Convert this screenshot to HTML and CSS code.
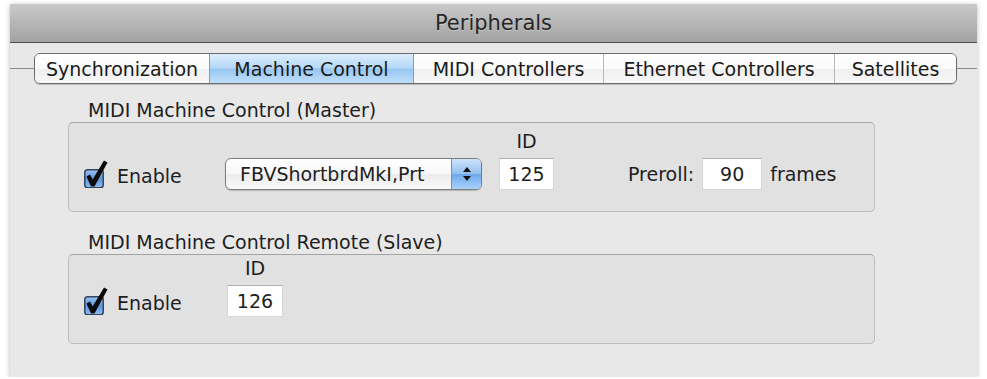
FILE: index.html
```html
<!DOCTYPE html>
<html>
<head>
<meta charset="utf-8">
<title>Peripherals</title>
<link rel="stylesheet" href="styles.css">
</head>
<body>
<div class="window">
  <div class="titlebar">Peripherals</div>
  <div class="tabbar">
    <div class="rule rule-left"></div>
    <div class="tabs">
      <div class="tab tab-sync">Synchronization</div>
      <div class="tab tab-machine selected">Machine Control</div>
      <div class="tab tab-midi">MIDI Controllers</div>
      <div class="tab tab-eth">Ethernet Controllers</div>
      <div class="tab tab-sat">Satellites</div>
    </div>
    <div class="rule rule-right"></div>
  </div>

  <div class="group group-master">
    <div class="group-label">MIDI Machine Control (Master)</div>
    <div class="group-box box-master">
      <div class="row">
        <div class="check check-master">
          <svg class="checkbox" width="24" height="28" viewBox="0 0 24 28">
            <defs>
              <linearGradient id="cb1" x1="0" y1="0" x2="0" y2="1">
                <stop offset="0" stop-color="#9cc2f0"/>
                <stop offset="0.5" stop-color="#5b95e0"/>
                <stop offset="1" stop-color="#8fc0f5"/>
              </linearGradient>
            </defs>
            <rect x="0.75" y="9.75" width="18.5" height="18" rx="3" fill="url(#cb1)" stroke="#34465e" stroke-width="1.5"/>
            <path d="M2.5 16.5 L6 14.5 L8.7 19.5 L20 0.5 L23.5 2.5 L10.5 26.5 L7 26.5 Z" fill="#0b0b0b"/>
          </svg>
          <span class="check-text">Enable</span>
        </div>
        <div class="popup">
          <span class="popup-text">FBVShortbrdMkI,Prt</span>
          <span class="stepper">
            <svg width="12" height="18" viewBox="0 0 12 18">
              <path d="M6 2 L10 7 L2 7 Z" fill="#111"/>
              <path d="M2 11 L10 11 L6 16 Z" fill="#111"/>
            </svg>
          </span>
        </div>
        <div class="idcol idcol-master">
          <div class="id-label">ID</div>
          <div class="field field-id">125</div>
        </div>
        <div class="inline-label preroll">Preroll:</div>
        <div class="field field-preroll">90</div>
        <div class="inline-label frames">frames</div>
      </div>
    </div>
  </div>

  <div class="group group-slave">
    <div class="group-label">MIDI Machine Control Remote (Slave)</div>
    <div class="group-box box-slave">
      <div class="row">
        <div class="check check-slave">
          <svg class="checkbox" width="24" height="28" viewBox="0 0 24 28">
            <defs>
              <linearGradient id="cb2" x1="0" y1="0" x2="0" y2="1">
                <stop offset="0" stop-color="#9cc2f0"/>
                <stop offset="0.5" stop-color="#5b95e0"/>
                <stop offset="1" stop-color="#8fc0f5"/>
              </linearGradient>
            </defs>
            <rect x="0.75" y="9.75" width="18.5" height="18" rx="3" fill="url(#cb2)" stroke="#34465e" stroke-width="1.5"/>
            <path d="M2.5 16.5 L6 14.5 L8.7 19.5 L20 0.5 L23.5 2.5 L10.5 26.5 L7 26.5 Z" fill="#0b0b0b"/>
          </svg>
          <span class="check-text">Enable</span>
        </div>
        <div class="idcol idcol-slave">
          <div class="id-label">ID</div>
          <div class="field field-id2">126</div>
        </div>
      </div>
    </div>
  </div>
</div>
</body>
</html>
```
FILE: styles.css
```css
* { box-sizing: border-box; }
html, body { margin: 0; padding: 0; background: #ffffff; }
body {
  font-family: "DejaVu Sans", "Liberation Sans", sans-serif;
  font-size: 19px;
  color: #1e1e1e;
}
.window {
  margin: 4px 0 0 10px;
  width: 967px;
  height: 373px;
  background: #e8e8e8;
  box-shadow: 0 1px 5px rgba(0,0,0,0.28);
  display: flex;
  flex-direction: column;
}
.titlebar {
  height: 39px;
  flex: none;
  background: linear-gradient(#c9c9c9, #b6b6b6 50%, #a3a3a3);
  border-bottom: 1px solid #4d4d4d;
  display: flex;
  align-items: center;
  justify-content: center;
  font-size: 21px;
  color: #262626;
  text-shadow: 0 1px 0 rgba(255,255,255,0.3);
}
.tabbar {
  margin-top: 10px;
  height: 31px;
  display: flex;
  align-items: center;
  flex: none;
}
.rule { height: 1px; background: #8a8a8a; }
.rule-left { width: 24px; flex: none; }
.rule-right { flex: 1; }
.tabs {
  display: flex;
  height: 31px;
  border: 1px solid #6c6c6c;
  border-radius: 6px;
  overflow: hidden;
  box-shadow: 0 1px 1px rgba(0,0,0,0.2);
}
.tab {
  height: 29px;
  display: flex;
  align-items: center;
  justify-content: center;
  background: linear-gradient(#ffffff 0%, #fbfbfb 50%, #f0f0f0 51%, #f7f7f7 100%);
  border-left: 1px solid #b8b8b8;
  color: #1a1a1a;
  white-space: nowrap;
}
.tab-sync { width: 174px; border-left: none; }
.tab-machine { width: 204px; }
.tab-midi { width: 190px; }
.tab-eth { width: 231px; }
.tab-sat { width: 122px; }
.tab.selected {
  background: linear-gradient(#dcedfd 0%, #b6d8f7 48%, #98c6f1 52%, #bfdffa 100%);
  border-left-color: #7f9cc0;
}
.tab.selected + .tab { border-left-color: #7f9cc0; }

.group { margin-left: 58px; width: 807px; flex: none; }
.group-master { margin-top: 15px; }
.group-slave { margin-top: 19px; }
.group-label {
  padding-left: 20px;
  line-height: 22px;
  margin-bottom: 1px;
  color: #1e1e1e;
}
.group-box {
  border: 1px solid #bdbdbd;
  border-top-color: #a3a3a3;
  border-radius: 5px;
  background: #e1e1e1;
  padding-left: 15px;
}
.box-master { height: 90px; padding-top: 7px; }
.box-slave { height: 90px; padding-top: 2px; }
.row {
  display: flex;
  align-items: flex-end;
}
.check {
  height: 32px;
  display: flex;
  align-items: center;
  flex: none;
}
.check-master { width: 141px; }
.check-slave { width: 143px; }
.checkbox { display: block; flex: none; }
.check-text { margin-left: 9px; margin-top: 4px; }
.popup {
  width: 257px;
  height: 32px;
  flex: none;
  display: flex;
  align-items: center;
  border: 1px solid #7c7c7c;
  border-radius: 6px;
  overflow: hidden;
  background: linear-gradient(#ffffff 0%, #f8f8f8 50%, #ebebeb 52%, #fbfbfb 100%);
  box-shadow: 0 1px 1px rgba(0,0,0,0.18);
}
.popup-text { flex: 1; padding-left: 14px; white-space: nowrap; }
.stepper {
  width: 30px;
  height: 100%;
  display: flex;
  align-items: center;
  justify-content: center;
  border-left: 1px solid #6f8fbf;
  background: linear-gradient(#cfe4fa 0%, #93c1f1 48%, #6fa9ec 52%, #a9d2fa 100%);
}
.stepper svg { display: block; }
.idcol {
  display: flex;
  flex-direction: column;
  align-items: center;
  flex: none;
}
.idcol-master { margin-left: 17px; }
.id-label { line-height: 22px; margin-bottom: 6px; }
.field {
  height: 32px;
  background: #ffffff;
  border: 1px solid #d6d6d6;
  border-top-color: #b0b0b0;
  display: flex;
  align-items: center;
  justify-content: center;
  flex: none;
}
.field-id { width: 55px; }
.field-id2 { width: 56px; }
.field-preroll { width: 60px; margin-left: 8px; }
.inline-label { height: 32px; display: flex; align-items: center; flex: none; }
.preroll { margin-left: 74px; }
.frames { margin-left: 8px; }
```
